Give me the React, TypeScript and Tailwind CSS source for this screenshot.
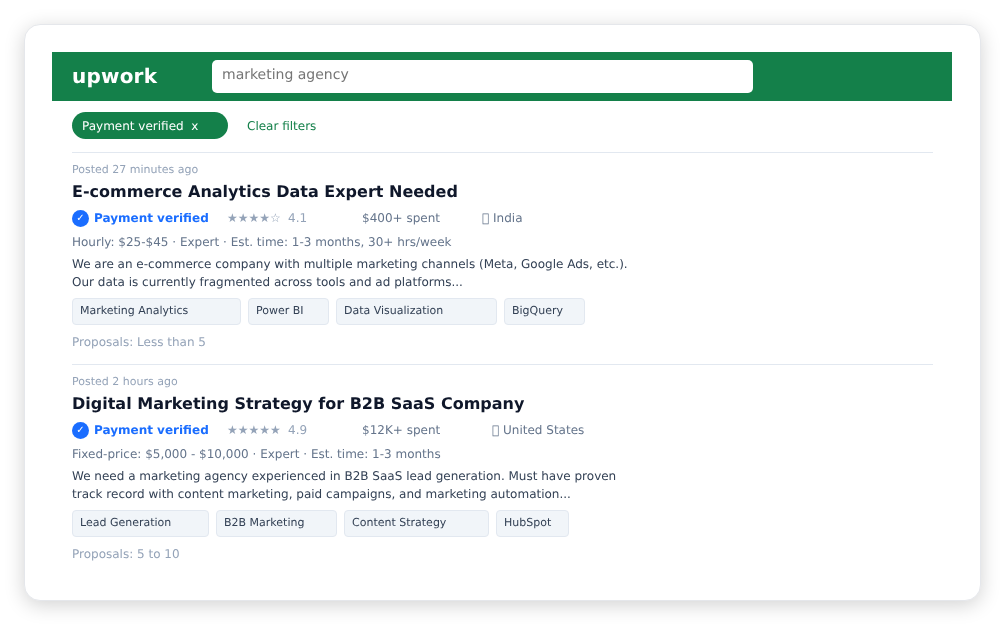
const jobs = [
  {
    posted: 'Posted 27 minutes ago',
    title: 'E-commerce Analytics Data Expert Needed',
    stars: '★★★★☆',
    rating: '4.1',
    spent: '$400+ spent',
    spentClass: 'w-[120px]',
    location: 'India',
    terms: 'Hourly: $25-$45 · Expert · Est. time: 1-3 months, 30+ hrs/week',
    lines: [
      'We are an e-commerce company with multiple marketing channels (Meta, Google Ads, etc.).',
      'Our data is currently fragmented across tools and ad platforms...',
    ],
    tags: [
      { label: 'Marketing Analytics', width: 'w-[169px]' },
      { label: 'Power BI', width: 'w-[81px]' },
      { label: 'Data Visualization', width: 'w-[161px]' },
      { label: 'BigQuery', width: 'w-[81px]' },
    ],
    proposals: 'Proposals: Less than 5',
  },
  {
    posted: 'Posted 2 hours ago',
    title: 'Digital Marketing Strategy for B2B SaaS Company',
    stars: '★★★★★',
    rating: '4.9',
    spent: '$12K+ spent',
    spentClass: 'w-[130px]',
    location: 'United States',
    terms: 'Fixed-price: $5,000 - $10,000 · Expert · Est. time: 1-3 months',
    lines: [
      'We need a marketing agency experienced in B2B SaaS lead generation. Must have proven',
      'track record with content marketing, paid campaigns, and marketing automation...',
    ],
    tags: [
      { label: 'Lead Generation', width: 'w-[137px]' },
      { label: 'B2B Marketing', width: 'w-[121px]' },
      { label: 'Content Strategy', width: 'w-[145px]' },
      { label: 'HubSpot', width: 'w-[73px]' },
    ],
    proposals: 'Proposals: 5 to 10',
  },
];

type Job = (typeof jobs)[number];

function JobRow({ job }: { job: Job }) {
  return (
    <div className="h-[212px] border-t border-[#e2e8f0] pt-[10px]">
      <div className="h-[14px] text-[11px] leading-[14px] text-[#94a3b8]">{job.posted}</div>
      <h2 className="mt-[3px] h-[24px] text-[16px] font-bold leading-[24px] text-[#0f172a]">{job.title}</h2>
      {/* Meta row */}
      <div className="mt-[4px] flex h-[20px] items-center text-[12px]">
        <span className="flex h-[17px] w-[17px] items-center justify-center rounded-full bg-[#1a6dff] text-[10px] text-white">
          ✓
        </span>
        <span className="ml-[5px] w-[133px] font-bold text-[#1a6dff]">Payment verified</span>
        <span className="w-[61px] text-[#94a3b8]">{job.stars}</span>
        <span className="w-[74px] text-[#94a3b8]">{job.rating}</span>
        <span className={`${job.spentClass} text-[#64748b]`}>{job.spent}</span>
        <span className="text-[#64748b]">{'\uE000'} {job.location}</span>
      </div>
      <div className="mt-[6px] h-[16px] text-[12px] leading-[16px] text-[#64748b]">{job.terms}</div>
      <div className="mt-[5px] text-[12px] leading-[18px] text-[#334155]">
        {job.lines.map((line) => (
          <div key={line}>{line}</div>
        ))}
      </div>
      <div className="mt-[7px] flex gap-[7px]">
        {job.tags.map((tag) => (
          <span
            key={tag.label}
            className={`${tag.width} h-[27px] rounded-[4px] border border-[#e2e8f0] bg-[#f1f5f9] px-[7px] text-[11px] leading-[23px] text-[#334155]`}
          >
            {tag.label}
          </span>
        ))}
      </div>
      <div className="mt-[9px] h-[16px] text-[12px] leading-[16px] text-[#94a3b8]">{job.proposals}</div>
    </div>
  );
}

export default function App() {
  return (
    <div className="h-[624px] w-[1004px] bg-white pl-[24px] pt-[24px] font-['DejaVu_Sans',sans-serif] [text-rendering:geometricPrecision]">
      <div className="h-[577px] w-[957px] rounded-[16px] border border-[#e5e7eb] bg-white px-[27px] pt-[27px] shadow-[0_4px_20px_rgba(0,0,0,0.18)] [will-change:transform]">
        {/* Top bar */}
        <header className="flex h-[49px] w-[900px] items-center bg-[#14804a] pl-[20px]">
          <span className="mb-[2px] w-[140px] text-[20px] font-bold tracking-[0.2px] text-white">upwork</span>
          <div className="h-[33px] w-[541px] rounded-[5px] bg-white px-[10px] text-[14px] leading-[30px] text-[#757575]">
            marketing agency
          </div>
        </header>
        {/* Filters */}
        <div className="flex h-[51px] items-start pl-[20px] pt-[11px]">
          <span className="h-[27px] w-[156px] rounded-full bg-[#14804a] pl-[10px] pt-[1px] text-[12px] leading-[27px] text-white">
            Payment verified&nbsp; x
          </span>
          <span className="ml-[19px] pt-[1px] text-[12px] leading-[27px] text-[#14804a]">Clear filters</span>
        </div>
        <div className="ml-[20px] w-[861px]">
          {jobs.map((job) => (
            <JobRow key={job.title} job={job} />
          ))}
        </div>
      </div>
    </div>
  );
}
